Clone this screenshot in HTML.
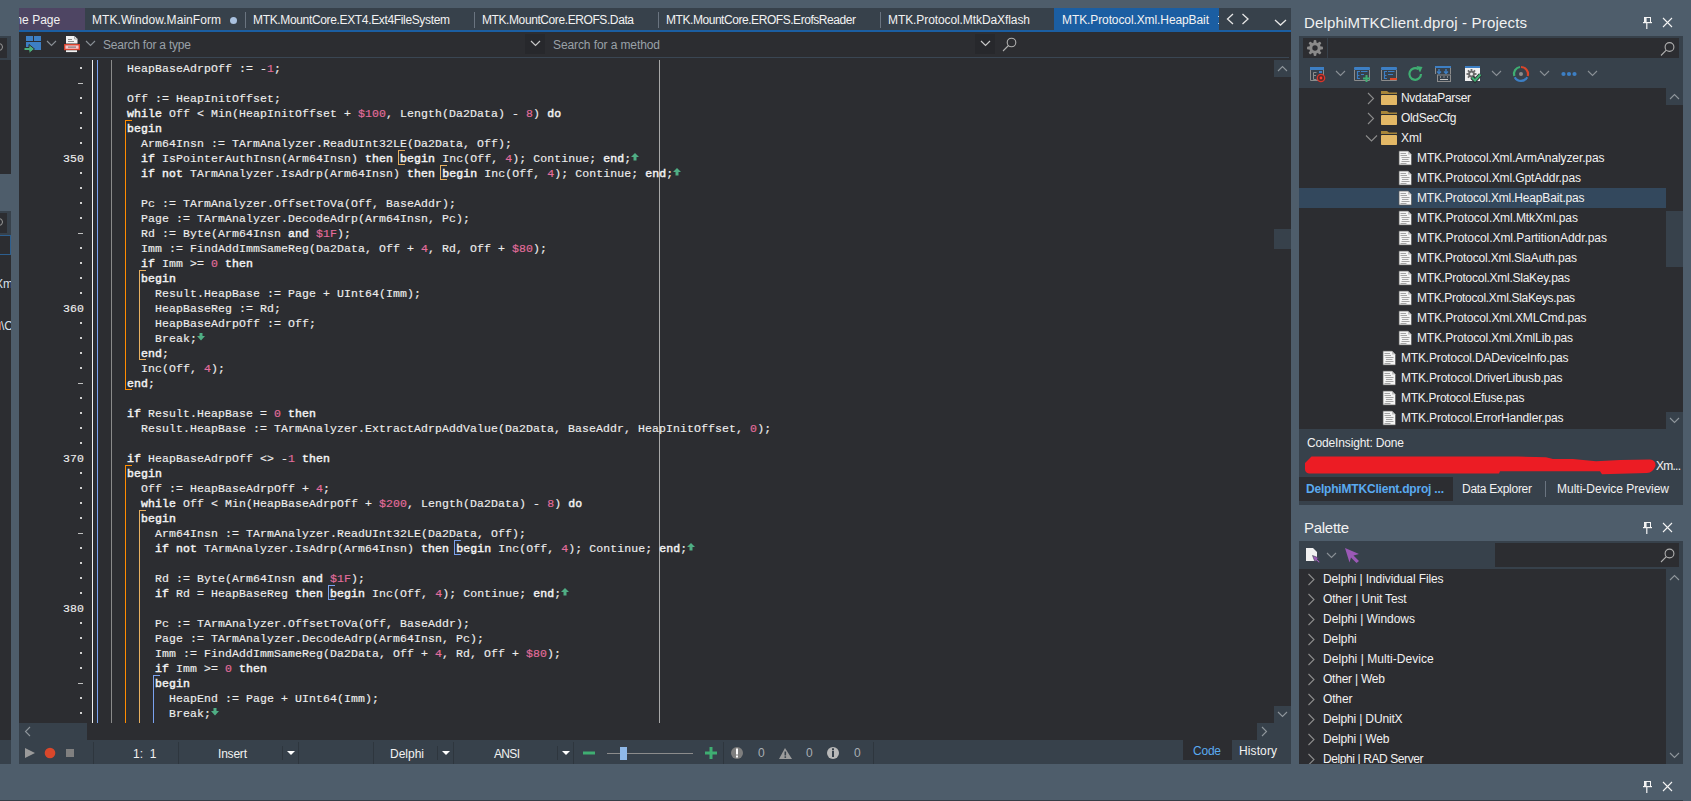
<!DOCTYPE html><html><head><meta charset="utf-8"><style>
*{margin:0;padding:0}
html,body{width:1691px;height:801px;overflow:hidden;background:#4e5d6b}
.a{position:absolute}
.ui{font-family:"Liberation Sans",sans-serif;font-size:12px;line-height:20px;color:#f2f2f2;white-space:pre}
.code{font-family:"Liberation Mono",monospace;font-size:11.5px;letter-spacing:0.1px;line-height:15px;color:#eeeeee;white-space:pre;-webkit-text-stroke:0.15px currentColor}
.code b{font-weight:normal;color:#f2f2f2;-webkit-text-stroke:0.45px currentColor}
.code i{font-style:normal;color:#e46d9d}
</style></head><body><div class="a" style="left:0px;top:0px;width:1691px;height:801px;background:#4e5d6b;"></div>
<div class="a" style="left:0px;top:36px;width:11px;height:704px;background:#2c2d31;"></div>
<div class="a" style="left:0px;top:36px;width:11px;height:24px;background:#37414b;"></div>
<div class="a" style="left:0px;top:38px;width:7px;height:20px;background:#2c2d31;"></div>
<div class="a" style="left:0px;top:174px;width:11px;height:37px;background:#4e5d6b;"></div>
<div class="a" style="left:0px;top:211px;width:11px;height:24px;background:#37414b;"></div>
<div class="a" style="left:0px;top:213px;width:7px;height:20px;background:#2c2d31;"></div>
<div class="a" style="left:0px;top:235px;width:11px;height:20px;background:#2c2d31;box-sizing:border-box;border:1px solid #2d5f8f;border-left:none"></div>
<div class="a" style="left:0px;top:740px;width:11px;height:24px;background:#37414b;"></div>
<div class="a" style="left:19px;top:8px;width:1272px;height:756px;background:#2c2d31;"></div>
<div class="a" style="left:19px;top:8px;width:1272px;height:22px;background:#37414b;"></div>
<div class="a" style="left:19px;top:8px;width:66px;height:22px;background:#4e4563;"></div>
<div class="a" style="left:1054px;top:8px;width:165px;height:22px;background:#1b5ea2;"></div>
<div class="a" style="left:19px;top:30px;width:1272px;height:2px;background:#1b5ea2;"></div>
<div class="a" style="left:19px;top:8px;width:66px;height:22px;overflow:hidden"><div class="a ui" style="left:-40px;top:2px">Welcome Page</div></div>
<div class="a ui" style="left:92px;top:10px;letter-spacing:0.054px;width:149px">MTK.Window.MainForm</div>
<div class="a ui" style="left:253px;top:10px;letter-spacing:-0.346px;width:217px">MTK.MountCore.EXT4.Ext4FileSystem</div>
<div class="a ui" style="left:482px;top:10px;letter-spacing:-0.408px;width:172px">MTK.MountCore.EROFS.Data</div>
<div class="a ui" style="left:666px;top:10px;letter-spacing:-0.447px;width:210px">MTK.MountCore.EROFS.ErofsReader</div>
<div class="a ui" style="left:888px;top:10px;letter-spacing:-0.089px;width:162px">MTK.Protocol.MtkDaXflash</div>
<div class="a ui" style="left:1062px;top:10px;letter-spacing:-0.100px;width:167px">MTK.Protocol.Xml.HeapBait</div>
<div class="a" style="left:245px;top:12px;width:1px;height:16px;background:#6a7480;"></div>
<div class="a" style="left:474px;top:12px;width:1px;height:16px;background:#6a7480;"></div>
<div class="a" style="left:658px;top:12px;width:1px;height:16px;background:#6a7480;"></div>
<div class="a" style="left:880px;top:12px;width:1px;height:16px;background:#6a7480;"></div>
<div class="a" style="left:230px;top:17px;width:7px;height:7px;border-radius:50%;background:#a9c1df"></div>
<svg class="a" style="left:1220px;top:8px" width="71" height="22" viewBox="0 0 71 22">
<path d="M13 6 L7.5 11 L13 16" fill="none" stroke="#e6e6e6" stroke-width="1.3"/>
<path d="M22.5 6 L28 11 L22.5 16" fill="none" stroke="#e6e6e6" stroke-width="1.3"/>
<path d="M55 12 L60.5 17 L66 12" fill="none" stroke="#e6e6e6" stroke-width="1.3"/>
</svg>
<div class="a" style="left:1218px;top:16px;width:1px;height:1px;background:#c8d8ea;"></div>
<div class="a" style="left:1218px;top:23px;width:1px;height:1px;background:#c8d8ea;"></div>
<svg class="a" style="left:0;top:36px" width="11" height="200"><circle cx="-1" cy="11" r="3.5" fill="none" stroke="#9a9a9a" stroke-width="1"/><circle cx="-1" cy="186" r="3.5" fill="none" stroke="#9a9a9a" stroke-width="1"/></svg>
<div class="a" style="left:19px;top:57px;width:1270px;height:1px;background:#3a4653;"></div>
<svg class="a" style="left:19px;top:32px" width="1272" height="25" viewBox="0 0 1272 25">
<rect x="7" y="4" width="7" height="5" fill="#3d7fc4"/><rect x="15" y="4" width="7" height="5" fill="#3d7fc4"/>
<rect x="7" y="10" width="15" height="8" fill="#3d7fc4"/>
<path d="M5 15.5 H10 V12.5 L15.5 17 L10 21.5 V18.5 H5 Z" fill="#4caf7a" stroke="#2c2d31" stroke-width="1"/>
<path d="M28 9 L32.5 13.5 L37 9" fill="none" stroke="#8a9096" stroke-width="1.1"/>
<path d="M47 4 H55.5 L58.5 7 V11.5 H47 Z" fill="#f2f2f2"/><path d="M55.5 4 V7 H58.5" fill="none" stroke="#9a9a9a" stroke-width="0.8"/>
<path d="M49 7.5 H53 M49 9.5 H55" stroke="#8c8c8c" stroke-width="1"/>
<rect x="45.7" y="12.7" width="14.6" height="4.8" fill="#f6c7cc" stroke="#d8432e" stroke-width="1.4"/>
<rect x="49" y="14.6" width="8" height="1" fill="#6a6a6a"/>
<rect x="47" y="18.3" width="11" height="1.8" fill="#f2f2f2"/>
<path d="M67 9 L71.5 13.5 L76 9" fill="none" stroke="#8a9096" stroke-width="1.1"/>
<rect x="506" y="2" width="20" height="20" fill="#27282c"/>
<path d="M512 9 L516.5 13.5 L521 9" fill="none" stroke="#c8c8c8" stroke-width="1.2"/>
<rect x="956" y="2" width="20" height="20" fill="#27282c"/>
<path d="M962 9 L966.5 13.5 L971 9" fill="none" stroke="#c8c8c8" stroke-width="1.2"/>
<circle cx="992.5" cy="10.5" r="4.3" fill="none" stroke="#b0b0b0" stroke-width="1.1"/>
<path d="M989.5 13.5 L984 19" stroke="#b0b0b0" stroke-width="1.1"/>
</svg>
<div class="a ui" style="left:103px;top:35px;letter-spacing:-0.212px;color:#9aa1a8;width:120px">Search for a type</div>
<div class="a ui" style="left:553px;top:35px;letter-spacing:-0.096px;color:#9aa1a8;width:140px">Search for a method</div>
<div class="a" style="left:19px;top:58px;width:1255px;height:665px;overflow:hidden">
<div class="a" style="left:73px;top:2px;width:1px;height:663px;background:#f0f0f0"></div>
<div class="a" style="left:78px;top:2px;width:1px;height:663px;background:#7aa2f0"></div>
<div class="a" style="left:92px;top:2px;width:1px;height:663px;background:#8a8a8a"></div>
<div class="a" style="left:640px;top:2px;width:1px;height:663px;background:#a8a8a8"></div>
<div class="a" style="left:106px;top:62px;width:1px;height:270px;background:#ff8c00"></div>
<div class="a" style="left:106px;top:62px;width:7px;height:1px;background:#ff8c00"></div>
<div class="a" style="left:106px;top:331px;width:7px;height:1px;background:#ff8c00"></div>
<div class="a" style="left:120px;top:212px;width:1px;height:90px;background:#e8b060"></div>
<div class="a" style="left:120px;top:212px;width:7px;height:1px;background:#e8b060"></div>
<div class="a" style="left:120px;top:301px;width:7px;height:1px;background:#e8b060"></div>
<div class="a" style="left:106px;top:407px;width:1px;height:258px;background:#ff8c00"></div>
<div class="a" style="left:106px;top:407px;width:7px;height:1px;background:#ff8c00"></div>
<div class="a" style="left:120px;top:452px;width:1px;height:213px;background:#e8b060"></div>
<div class="a" style="left:120px;top:452px;width:7px;height:1px;background:#e8b060"></div>
<div class="a" style="left:134px;top:617px;width:1px;height:48px;background:#7aa2f0"></div>
<div class="a" style="left:134px;top:617px;width:7px;height:1px;background:#7aa2f0"></div>
<div class="a" style="left:379px;top:92px;width:1px;height:15px;background:#e8b060"></div>
<div class="a" style="left:379px;top:92px;width:7px;height:1px;background:#e8b060"></div>
<div class="a" style="left:379px;top:106px;width:7px;height:1px;background:#e8b060"></div>
<div class="a" style="left:421px;top:107px;width:1px;height:15px;background:#e8b060"></div>
<div class="a" style="left:421px;top:107px;width:7px;height:1px;background:#e8b060"></div>
<div class="a" style="left:421px;top:121px;width:7px;height:1px;background:#e8b060"></div>
<div class="a" style="left:435px;top:482px;width:1px;height:15px;background:#7aa2f0"></div>
<div class="a" style="left:435px;top:482px;width:7px;height:1px;background:#7aa2f0"></div>
<div class="a" style="left:435px;top:496px;width:7px;height:1px;background:#7aa2f0"></div>
<div class="a" style="left:309px;top:527px;width:1px;height:15px;background:#7aa2f0"></div>
<div class="a" style="left:309px;top:527px;width:7px;height:1px;background:#7aa2f0"></div>
<div class="a" style="left:309px;top:541px;width:7px;height:1px;background:#7aa2f0"></div>
<div class="a" style="left:61px;top:9px;width:2px;height:2px;background:#d0d0d0"></div>
<div class="a" style="left:59px;top:25px;width:5px;height:1px;background:#c0c0c0"></div>
<div class="a" style="left:61px;top:39px;width:2px;height:2px;background:#d0d0d0"></div>
<div class="a" style="left:61px;top:54px;width:2px;height:2px;background:#d0d0d0"></div>
<div class="a" style="left:61px;top:69px;width:2px;height:2px;background:#d0d0d0"></div>
<div class="a" style="left:61px;top:84px;width:2px;height:2px;background:#d0d0d0"></div>
<div class="a code" style="left:44px;top:93px;width:21px;text-align:right">350</div>
<div class="a" style="left:61px;top:114px;width:2px;height:2px;background:#d0d0d0"></div>
<div class="a" style="left:61px;top:129px;width:2px;height:2px;background:#d0d0d0"></div>
<div class="a" style="left:61px;top:144px;width:2px;height:2px;background:#d0d0d0"></div>
<div class="a" style="left:61px;top:159px;width:2px;height:2px;background:#d0d0d0"></div>
<div class="a" style="left:59px;top:175px;width:5px;height:1px;background:#c0c0c0"></div>
<div class="a" style="left:61px;top:189px;width:2px;height:2px;background:#d0d0d0"></div>
<div class="a" style="left:61px;top:204px;width:2px;height:2px;background:#d0d0d0"></div>
<div class="a" style="left:61px;top:219px;width:2px;height:2px;background:#d0d0d0"></div>
<div class="a" style="left:61px;top:234px;width:2px;height:2px;background:#d0d0d0"></div>
<div class="a code" style="left:44px;top:243px;width:21px;text-align:right">360</div>
<div class="a" style="left:61px;top:264px;width:2px;height:2px;background:#d0d0d0"></div>
<div class="a" style="left:61px;top:279px;width:2px;height:2px;background:#d0d0d0"></div>
<div class="a" style="left:61px;top:294px;width:2px;height:2px;background:#d0d0d0"></div>
<div class="a" style="left:61px;top:309px;width:2px;height:2px;background:#d0d0d0"></div>
<div class="a" style="left:59px;top:325px;width:5px;height:1px;background:#c0c0c0"></div>
<div class="a" style="left:61px;top:339px;width:2px;height:2px;background:#d0d0d0"></div>
<div class="a" style="left:61px;top:354px;width:2px;height:2px;background:#d0d0d0"></div>
<div class="a" style="left:61px;top:369px;width:2px;height:2px;background:#d0d0d0"></div>
<div class="a" style="left:61px;top:384px;width:2px;height:2px;background:#d0d0d0"></div>
<div class="a code" style="left:44px;top:393px;width:21px;text-align:right">370</div>
<div class="a" style="left:61px;top:414px;width:2px;height:2px;background:#d0d0d0"></div>
<div class="a" style="left:61px;top:429px;width:2px;height:2px;background:#d0d0d0"></div>
<div class="a" style="left:61px;top:444px;width:2px;height:2px;background:#d0d0d0"></div>
<div class="a" style="left:61px;top:459px;width:2px;height:2px;background:#d0d0d0"></div>
<div class="a" style="left:59px;top:475px;width:5px;height:1px;background:#c0c0c0"></div>
<div class="a" style="left:61px;top:489px;width:2px;height:2px;background:#d0d0d0"></div>
<div class="a" style="left:61px;top:504px;width:2px;height:2px;background:#d0d0d0"></div>
<div class="a" style="left:61px;top:519px;width:2px;height:2px;background:#d0d0d0"></div>
<div class="a" style="left:61px;top:534px;width:2px;height:2px;background:#d0d0d0"></div>
<div class="a code" style="left:44px;top:543px;width:21px;text-align:right">380</div>
<div class="a" style="left:61px;top:564px;width:2px;height:2px;background:#d0d0d0"></div>
<div class="a" style="left:61px;top:579px;width:2px;height:2px;background:#d0d0d0"></div>
<div class="a" style="left:61px;top:594px;width:2px;height:2px;background:#d0d0d0"></div>
<div class="a" style="left:61px;top:609px;width:2px;height:2px;background:#d0d0d0"></div>
<div class="a" style="left:59px;top:625px;width:5px;height:1px;background:#c0c0c0"></div>
<div class="a" style="left:61px;top:639px;width:2px;height:2px;background:#d0d0d0"></div>
<div class="a" style="left:61px;top:654px;width:2px;height:2px;background:#d0d0d0"></div>
<pre class="a code" style="left:108px;top:3px">HeapBaseAdrpOff := -<i>1</i>;

Off := HeapInitOffset;
<b>while</b> Off &lt; Min(HeapInitOffset + <i>$100</i>, Length(Da2Data) - <i>8</i>) <b>do</b>
<b>begin</b>
  Arm64Insn := TArmAnalyzer.ReadUInt32LE(Da2Data, Off);
  <b>if</b> IsPointerAuthInsn(Arm64Insn) <b>then</b> <b>begin</b> Inc(Off, <i>4</i>); Continue; <b>end</b>;
  <b>if</b> <b>not</b> TArmAnalyzer.IsAdrp(Arm64Insn) <b>then</b> <b>begin</b> Inc(Off, <i>4</i>); Continue; <b>end</b>;

  Pc := TArmAnalyzer.OffsetToVa(Off, BaseAddr);
  Page := TArmAnalyzer.DecodeAdrp(Arm64Insn, Pc);
  Rd := Byte(Arm64Insn <b>and</b> <i>$1F</i>);
  Imm := FindAddImmSameReg(Da2Data, Off + <i>4</i>, Rd, Off + <i>$80</i>);
  <b>if</b> Imm &gt;= <i>0</i> <b>then</b>
  <b>begin</b>
    Result.HeapBase := Page + UInt64(Imm);
    HeapBaseReg := Rd;
    HeapBaseAdrpOff := Off;
    Break;
  <b>end</b>;
  Inc(Off, <i>4</i>);
<b>end</b>;

<b>if</b> Result.HeapBase = <i>0</i> <b>then</b>
  Result.HeapBase := TArmAnalyzer.ExtractAdrpAddValue(Da2Data, BaseAddr, HeapInitOffset, <i>0</i>);

<b>if</b> HeapBaseAdrpOff &lt;&gt; -<i>1</i> <b>then</b>
<b>begin</b>
  Off := HeapBaseAdrpOff + <i>4</i>;
  <b>while</b> Off &lt; Min(HeapBaseAdrpOff + <i>$200</i>, Length(Da2Data) - <i>8</i>) <b>do</b>
  <b>begin</b>
    Arm64Insn := TArmAnalyzer.ReadUInt32LE(Da2Data, Off);
    <b>if</b> <b>not</b> TArmAnalyzer.IsAdrp(Arm64Insn) <b>then</b> <b>begin</b> Inc(Off, <i>4</i>); Continue; <b>end</b>;

    Rd := Byte(Arm64Insn <b>and</b> <i>$1F</i>);
    <b>if</b> Rd = HeapBaseReg <b>then</b> <b>begin</b> Inc(Off, <i>4</i>); Continue; <b>end</b>;

    Pc := TArmAnalyzer.OffsetToVa(Off, BaseAddr);
    Page := TArmAnalyzer.DecodeAdrp(Arm64Insn, Pc);
    Imm := FindAddImmSameReg(Da2Data, Off + <i>4</i>, Rd, Off + <i>$80</i>);
    <b>if</b> Imm &gt;= <i>0</i> <b>then</b>
    <b>begin</b>
      HeapEnd := Page + UInt64(Imm);
      Break;</pre>
<svg class="a" style="left:-19px;top:-58px" width="1300" height="800"><path fill="#4fae84" d="M635 153 L639 157 H636.5 V160.5 H633.5 V157 H631 Z M677 168 L681 172 H678.5 V175.5 H675.5 V172 H673 Z M691 543 L695 547 H692.5 V550.5 H689.5 V547 H687 Z M565 588 L569 592 H566.5 V595.5 H563.5 V592 H561 Z M199.5 333 H202.5 V336 H205 L201 340.5 L197 336 H199.5 Z M213.5 708 H216.5 V711 H219 L215 715.5 L211 711 H213.5 Z"/></svg>
</div>
<div class="a" style="left:1274px;top:60px;width:17px;height:17px;background:#37414b;"></div>
<svg class="a" style="left:1274px;top:60px" width="17" height="17"><path d="M4 11 L8.5 6.5 L13 11" fill="none" stroke="#8f969c" stroke-width="1.1"/></svg>
<div class="a" style="left:1274px;top:229px;width:17px;height:20px;background:#37414b;"></div>
<div class="a" style="left:1274px;top:706px;width:17px;height:17px;background:#37414b;"></div>
<svg class="a" style="left:1274px;top:706px" width="17" height="17"><path d="M4 6 L8.5 10.5 L13 6" fill="none" stroke="#8f969c" stroke-width="1.1"/></svg>
<div class="a" style="left:19px;top:723px;width:68px;height:17px;background:#37414b;"></div>
<svg class="a" style="left:19px;top:723px" width="20" height="17"><path d="M11 4 L6.5 8.5 L11 13" fill="none" stroke="#8f969c" stroke-width="1.1"/></svg>
<div class="a" style="left:1257px;top:723px;width:34px;height:17px;background:#37414b;"></div>
<svg class="a" style="left:1257px;top:723px" width="20" height="17"><path d="M5 4 L9.5 8.5 L5 13" fill="none" stroke="#8f969c" stroke-width="1.1"/></svg>
<div class="a" style="left:19px;top:740px;width:1272px;height:24px;background:#37414b;"></div>
<div class="a" style="left:93px;top:742px;width:1px;height:22px;background:#2e363e;"></div>
<div class="a" style="left:178px;top:742px;width:1px;height:22px;background:#2e363e;"></div>
<div class="a" style="left:298px;top:742px;width:1px;height:22px;background:#2e363e;"></div>
<div class="a" style="left:373px;top:742px;width:1px;height:22px;background:#2e363e;"></div>
<div class="a" style="left:453px;top:742px;width:1px;height:22px;background:#2e363e;"></div>
<div class="a" style="left:573px;top:742px;width:1px;height:22px;background:#2e363e;"></div>
<div class="a" style="left:723px;top:742px;width:1px;height:22px;background:#2e363e;"></div>
<div class="a" style="left:873px;top:742px;width:1px;height:22px;background:#2e363e;"></div>
<div class="a" style="left:282px;top:746px;width:1px;height:14px;background:#2e363e;"></div>
<div class="a" style="left:437px;top:746px;width:1px;height:14px;background:#2e363e;"></div>
<div class="a" style="left:557px;top:746px;width:1px;height:14px;background:#2e363e;"></div>
<svg class="a" style="left:19px;top:740px" width="1272" height="24">
<path d="M6 8 L16 13 L6 18 Z" fill="#9b9b9b"/>
<circle cx="31" cy="13" r="5.3" fill="#d9472b"/>
<rect x="47" y="9" width="8" height="8" fill="#808080"/>
<path d="M268 11 L272 15 L276 11 Z" fill="#ffffff"/>
<path d="M423 11 L427 15 L431 11 Z" fill="#ffffff"/>
<path d="M543 11 L547 15 L551 11 Z" fill="#ffffff"/>
<rect x="564" y="11.5" width="12" height="3" fill="#3fae72"/>
<rect x="588" y="13" width="86" height="1" fill="#8c8c8c"/>
<rect x="601" y="7" width="7" height="13" fill="#8fb9e9"/>
<rect x="686" y="11.5" width="12" height="3" fill="#3fae72"/><rect x="690.5" y="7" width="3" height="12" fill="#3fae72"/>
<circle cx="718" cy="13" r="6" fill="#7e7e7e"/><rect x="717" y="8.5" width="2" height="6" fill="#fff"/><rect x="717" y="15.5" width="2" height="2" fill="#fff"/>
<path d="M766 8 L773 19 H760 Z" fill="#9c9c9c"/><rect x="765.5" y="11.5" width="1.6" height="4" fill="#37414b"/><rect x="765.5" y="16.3" width="1.6" height="1.6" fill="#37414b"/>
<circle cx="814" cy="13" r="6" fill="#b9b9b9"/><rect x="813" y="11" width="2" height="6" fill="#37414b"/><rect x="813" y="8.3" width="2" height="2" fill="#37414b"/>
</svg>
<div class="a ui" style="left:133px;top:744px;width:40px">1:  1</div>
<div class="a ui" style="left:218px;top:744px;letter-spacing:-0.203px;width:40px">Insert</div>
<div class="a ui" style="left:390px;top:744px;letter-spacing:-0.006px;width:40px">Delphi</div>
<div class="a ui" style="left:494px;top:744px;letter-spacing:-0.672px;width:40px">ANSI</div>
<div class="a ui" style="left:758px;top:743px;color:#a8aeb4;width:10px">0</div>
<div class="a ui" style="left:806px;top:743px;color:#a8aeb4;width:10px">0</div>
<div class="a ui" style="left:854px;top:743px;color:#a8aeb4;width:10px">0</div>
<div class="a" style="left:1183px;top:740px;width:49px;height:20px;background:#2c2d31;"></div>
<div class="a ui" style="left:1193px;top:741px;letter-spacing:-0.229px;color:#5aaaf0;width:40px">Code</div>
<div class="a ui" style="left:1239px;top:741px;letter-spacing:0.109px;width:50px">History</div>
<div class="a ui" style="left:1304px;top:13px;letter-spacing:0.175px;font-size:15px;width:300px">DelphiMTKClient.dproj - Projects</div>
<svg class="a" style="left:1640px;top:14px" width="40" height="16">
<rect x="4.5" y="3.5" width="6" height="5" fill="none" stroke="#f4f4f4" stroke-width="1"/><rect x="5" y="4" width="1.6" height="4.5" fill="#f4f4f4"/>
<rect x="3" y="8" width="9" height="1.2" fill="#f4f4f4"/><rect x="6.2" y="9" width="1.2" height="6" fill="#f4f4f4"/>
<path d="M23 4 L32 13 M32 4 L23 13" fill="none" stroke="#f4f4f4" stroke-width="1.1"/>
</svg>
<div class="a" style="left:1299px;top:36px;width:384px;height:469px;background:#37414b;"></div>
<div class="a" style="left:1303px;top:38px;width:24px;height:20px;background:#2c2d31;"></div>
<div class="a" style="left:1328px;top:38px;width:351px;height:20px;background:#2c2d31;"></div>
<svg class="a" style="left:1303px;top:38px" width="24" height="20" viewBox="0 0 24 20">
<g fill="#8a8a8a" transform="translate(12 10)"><circle r="5.8"/><rect x="-1.4" y="-8" width="2.8" height="3.5" rx="1" transform="rotate(0)"/><rect x="-1.4" y="-8" width="2.8" height="3.5" rx="1" transform="rotate(45)"/><rect x="-1.4" y="-8" width="2.8" height="3.5" rx="1" transform="rotate(90)"/><rect x="-1.4" y="-8" width="2.8" height="3.5" rx="1" transform="rotate(135)"/><rect x="-1.4" y="-8" width="2.8" height="3.5" rx="1" transform="rotate(180)"/><rect x="-1.4" y="-8" width="2.8" height="3.5" rx="1" transform="rotate(225)"/><rect x="-1.4" y="-8" width="2.8" height="3.5" rx="1" transform="rotate(270)"/><rect x="-1.4" y="-8" width="2.8" height="3.5" rx="1" transform="rotate(315)"/></g><circle cx="12" cy="10" r="2.7" fill="#2c2d31"/></svg>
<svg class="a" style="left:1655px;top:38px" width="24" height="20"><circle cx="14.5" cy="9" r="4.4" fill="none" stroke="#b0b0b0" stroke-width="1.1"/><path d="M11.3 12.2 L6 17.5" stroke="#b0b0b0" stroke-width="1.1"/></svg>
<svg class="a" style="left:1299px;top:58px" width="384" height="30">
<rect x="11" y="9" width="14" height="3" fill="#3d7fc4"/>
<path d="M11.5 12 V22.5 H24.5 V12" fill="none" stroke="#8c8c8c" stroke-width="1"/>
<path d="M17.5 14.5 H14.5 V21.5 H17.5 M14.5 17.5 H17" fill="none" stroke="#8c8c8c" stroke-width="1"/>
<rect x="20" y="13" width="3" height="2" fill="#3d7fc4"/>
<circle cx="22" cy="20" r="3.7" fill="#5a2a2a" stroke="#d8352a" stroke-width="1.3"/><circle cx="22" cy="20" r="1.4" fill="#ff3b30"/>
<path d="M37 13 L41.5 17.5 L46 13" fill="none" stroke="#8a9096" stroke-width="1.1"/>
<rect x="55" y="9" width="16" height="3" rx="1" fill="#3d7fc4"/>
<path d="M55.5 12 V22.5 H70.5 V12" fill="none" stroke="#8c8c8c" stroke-width="1"/>
<path d="M61 13.5 H58.5 V20.5 H61 M58.5 17.5 H60.5" fill="none" stroke="#3d7fc4" stroke-width="1.2"/>
<path d="M62 13.5 H68.5 M62 16.5 H65" fill="none" stroke="#3d7fc4" stroke-width="1"/>
<path d="M64 20.6 H71 M67.5 17 V24" stroke="#3fae72" stroke-width="2"/>
<rect x="82" y="9" width="16" height="3" rx="1" fill="#3d7fc4"/>
<path d="M82.5 12 V22.5 H97.5 V12" fill="none" stroke="#8c8c8c" stroke-width="1"/>
<path d="M88 13.5 H85.5 V20.5 H88 M85.5 17.5 H87.5" fill="none" stroke="#3d7fc4" stroke-width="1.2"/>
<path d="M89 13.5 H95.5 M89 16.5 H94" fill="none" stroke="#3d7fc4" stroke-width="1"/>
<rect x="91" y="20" width="7" height="2" fill="#e04a2a"/>
<g transform="translate(109 8)">
<path d="M13 8 A5.8 5.8 0 1 1 10.5 3.2" fill="none" stroke="#3fae72" stroke-width="2.2"/>
<path d="M8.5 0 L14.5 1 L12 6.5 Z" fill="#3fae72"/>
</g>
<g transform="translate(136 8)">
<rect x="0" y="0" width="16" height="2" fill="#3d7fc4"/><path d="M0.5 2 V8 M15.5 2 V8" stroke="#8c8c8c"/>
<path d="M4 3 V7 M2 5.5 L4 7.5 L6 5.5 M11 3 V7 M9 5.5 L11 7.5 L13 5.5" fill="none" stroke="#3d7fc4" stroke-width="1.4"/>
<rect x="2.5" y="9" width="13" height="6.5" fill="none" stroke="#8c8c8c"/>
<path d="M5 11 H6 M8.5 11 H9.5 M12 11 H13 M5 13.5 H13" stroke="#c8c8c8"/>
</g>
<g transform="translate(166 8)">
<rect x="0" y="0" width="15" height="2" fill="#3d7fc4"/><rect x="0" y="2" width="15" height="13" fill="#f0f0f0"/>
<g transform="translate(6.5 8)" fill="#6a6a6a"><circle r="3.3"/><rect x="-0.9" y="-5" width="1.8" height="10"/><rect x="-5" y="-0.9" width="10" height="1.8"/><rect x="-0.9" y="-5" width="1.8" height="10" transform="rotate(45)"/><rect x="-0.9" y="-5" width="1.8" height="10" transform="rotate(-45)"/></g>
<circle cx="6.5" cy="8" r="1.5" fill="#f0f0f0"/>
<path d="M7 11.5 L10 14.5 L15.5 8.5" fill="none" stroke="#2c2d31" stroke-width="4"/>
<path d="M7 11.5 L10 14.5 L15.5 8.5" fill="none" stroke="#3fae72" stroke-width="2.2"/>
</g>
<path d="M193 13 L197.5 17.5 L202 13" fill="none" stroke="#8a9096" stroke-width="1.1"/>
<g transform="translate(222 16)">
<path d="M0 -7 A7 7 0 0 1 6.7 2" fill="none" stroke="#d8452a" stroke-width="2.2"/>
<path d="M6.2 3.2 A7 7 0 0 1 -6.2 3.2" fill="none" stroke="#3d7fc4" stroke-width="2.2"/>
<path d="M-6.7 2 A7 7 0 0 1 -1 -7" fill="none" stroke="#3fae72" stroke-width="2.2"/>
<circle r="2" fill="#8c8c8c"/>
</g>
<path d="M241 13 L245.5 17.5 L250 13" fill="none" stroke="#8a9096" stroke-width="1.1"/>
<circle cx="264.5" cy="16" r="2.1" fill="#3d7fc4"/><circle cx="270" cy="16" r="2.1" fill="#3d7fc4"/><circle cx="275.5" cy="16" r="2.1" fill="#3d7fc4"/>
<path d="M289 13 L293.5 17.5 L298 13" fill="none" stroke="#8a9096" stroke-width="1.1"/>
</svg>
<div class="a" style="left:1299px;top:88px;width:384px;height:341px;background:#2c2d31;"></div>
<div class="a" style="left:1299px;top:188px;width:367px;height:20px;background:#33485d;"></div>
<div class="a" style="left:1666px;top:88px;width:17px;height:17px;background:#37414b;"></div>
<div class="a" style="left:1666px;top:211px;width:17px;height:56px;background:#37414b;"></div>
<div class="a" style="left:1666px;top:412px;width:17px;height:17px;background:#37414b;"></div>
<svg class="a" style="left:1666px;top:88px" width="17" height="341"><path d="M4 11 L8.5 6.5 L13 11" fill="none" stroke="#8f969c" stroke-width="1.1"/><path d="M4 330 L8.5 334.5 L13 330" fill="none" stroke="#8f969c" stroke-width="1.1"/></svg>
<div class="a ui" style="left:1401px;top:88px;letter-spacing:-0.307px;width:120px">NvdataParser</div>
<div class="a ui" style="left:1401px;top:108px;letter-spacing:-0.316px;width:120px">OldSecCfg</div>
<div class="a ui" style="left:1401px;top:128px;letter-spacing:-0.036px;width:120px">Xml</div>
<div class="a ui" style="left:1417px;top:148px;letter-spacing:-0.104px;width:240px">MTK.Protocol.Xml.ArmAnalyzer.pas</div>
<div class="a ui" style="left:1417px;top:168px;letter-spacing:-0.101px;width:240px">MTK.Protocol.Xml.GptAddr.pas</div>
<div class="a ui" style="left:1417px;top:188px;letter-spacing:-0.160px;width:240px">MTK.Protocol.Xml.HeapBait.pas</div>
<div class="a ui" style="left:1417px;top:208px;letter-spacing:-0.066px;width:240px">MTK.Protocol.Xml.MtkXml.pas</div>
<div class="a ui" style="left:1417px;top:228px;letter-spacing:-0.043px;width:240px">MTK.Protocol.Xml.PartitionAddr.pas</div>
<div class="a ui" style="left:1417px;top:248px;letter-spacing:-0.175px;width:240px">MTK.Protocol.Xml.SlaAuth.pas</div>
<div class="a ui" style="left:1417px;top:268px;letter-spacing:-0.263px;width:240px">MTK.Protocol.Xml.SlaKey.pas</div>
<div class="a ui" style="left:1417px;top:288px;letter-spacing:-0.323px;width:240px">MTK.Protocol.Xml.SlaKeys.pas</div>
<div class="a ui" style="left:1417px;top:308px;letter-spacing:-0.120px;width:240px">MTK.Protocol.Xml.XMLCmd.pas</div>
<div class="a ui" style="left:1417px;top:328px;letter-spacing:-0.130px;width:240px">MTK.Protocol.Xml.XmlLib.pas</div>
<div class="a ui" style="left:1401px;top:348px;letter-spacing:-0.160px;width:240px">MTK.Protocol.DADeviceInfo.pas</div>
<div class="a ui" style="left:1401px;top:368px;letter-spacing:-0.159px;width:240px">MTK.Protocol.DriverLibusb.pas</div>
<div class="a ui" style="left:1401px;top:388px;letter-spacing:-0.285px;width:240px">MTK.Protocol.Efuse.pas</div>
<div class="a ui" style="left:1401px;top:408px;letter-spacing:-0.148px;width:240px">MTK.Protocol.ErrorHandler.pas</div>
<svg class="a" style="left:0;top:0" width="1691" height="801"><path d="M1368 93 L1373.5 98.5 L1368 104" fill="none" stroke="#8c8c8c" stroke-width="1.1"/><path d="M1381 91 H1387 L1389 92.5 H1397 V94 H1381 Z" fill="#a8863a"/><rect x="1381" y="95" width="16" height="10" rx="0.8" fill="#e3b866"/><path d="M1368 113 L1373.5 118.5 L1368 124" fill="none" stroke="#8c8c8c" stroke-width="1.1"/><path d="M1381 111 H1387 L1389 112.5 H1397 V114 H1381 Z" fill="#a8863a"/><rect x="1381" y="115" width="16" height="10" rx="0.8" fill="#e3b866"/><path d="M1366 135.5 L1371.5 141 L1377 135.5" fill="none" stroke="#8c8c8c" stroke-width="1.1"/><path d="M1381 131 H1387 L1389 132.5 H1397 V134 H1381 Z" fill="#a8863a"/><rect x="1381" y="135" width="16" height="10" rx="0.8" fill="#e3b866"/><path d="M1399 151 H1408 L1411.5 154.5 V165 H1399 Z" fill="#f4f4f4" stroke="#5a5a5a" stroke-width="0.7"/><path d="M1408 151 V154.5 H1411.5 Z" fill="#c0c0c0"/><path d="M1400.5 153.5 H1406 M1400.5 155.5 H1407 M1401.5 157.5 H1409.5 M1402 159.5 H1408.5 M1401.5 161.5 H1409.5 M1400.5 163.5 H1406.5" stroke="#a4a4a4" stroke-width="1"/><path d="M1399 171 H1408 L1411.5 174.5 V185 H1399 Z" fill="#f4f4f4" stroke="#5a5a5a" stroke-width="0.7"/><path d="M1408 171 V174.5 H1411.5 Z" fill="#c0c0c0"/><path d="M1400.5 173.5 H1406 M1400.5 175.5 H1407 M1401.5 177.5 H1409.5 M1402 179.5 H1408.5 M1401.5 181.5 H1409.5 M1400.5 183.5 H1406.5" stroke="#a4a4a4" stroke-width="1"/><path d="M1399 191 H1408 L1411.5 194.5 V205 H1399 Z" fill="#f4f4f4" stroke="#5a5a5a" stroke-width="0.7"/><path d="M1408 191 V194.5 H1411.5 Z" fill="#c0c0c0"/><path d="M1400.5 193.5 H1406 M1400.5 195.5 H1407 M1401.5 197.5 H1409.5 M1402 199.5 H1408.5 M1401.5 201.5 H1409.5 M1400.5 203.5 H1406.5" stroke="#a4a4a4" stroke-width="1"/><path d="M1399 211 H1408 L1411.5 214.5 V225 H1399 Z" fill="#f4f4f4" stroke="#5a5a5a" stroke-width="0.7"/><path d="M1408 211 V214.5 H1411.5 Z" fill="#c0c0c0"/><path d="M1400.5 213.5 H1406 M1400.5 215.5 H1407 M1401.5 217.5 H1409.5 M1402 219.5 H1408.5 M1401.5 221.5 H1409.5 M1400.5 223.5 H1406.5" stroke="#a4a4a4" stroke-width="1"/><path d="M1399 231 H1408 L1411.5 234.5 V245 H1399 Z" fill="#f4f4f4" stroke="#5a5a5a" stroke-width="0.7"/><path d="M1408 231 V234.5 H1411.5 Z" fill="#c0c0c0"/><path d="M1400.5 233.5 H1406 M1400.5 235.5 H1407 M1401.5 237.5 H1409.5 M1402 239.5 H1408.5 M1401.5 241.5 H1409.5 M1400.5 243.5 H1406.5" stroke="#a4a4a4" stroke-width="1"/><path d="M1399 251 H1408 L1411.5 254.5 V265 H1399 Z" fill="#f4f4f4" stroke="#5a5a5a" stroke-width="0.7"/><path d="M1408 251 V254.5 H1411.5 Z" fill="#c0c0c0"/><path d="M1400.5 253.5 H1406 M1400.5 255.5 H1407 M1401.5 257.5 H1409.5 M1402 259.5 H1408.5 M1401.5 261.5 H1409.5 M1400.5 263.5 H1406.5" stroke="#a4a4a4" stroke-width="1"/><path d="M1399 271 H1408 L1411.5 274.5 V285 H1399 Z" fill="#f4f4f4" stroke="#5a5a5a" stroke-width="0.7"/><path d="M1408 271 V274.5 H1411.5 Z" fill="#c0c0c0"/><path d="M1400.5 273.5 H1406 M1400.5 275.5 H1407 M1401.5 277.5 H1409.5 M1402 279.5 H1408.5 M1401.5 281.5 H1409.5 M1400.5 283.5 H1406.5" stroke="#a4a4a4" stroke-width="1"/><path d="M1399 291 H1408 L1411.5 294.5 V305 H1399 Z" fill="#f4f4f4" stroke="#5a5a5a" stroke-width="0.7"/><path d="M1408 291 V294.5 H1411.5 Z" fill="#c0c0c0"/><path d="M1400.5 293.5 H1406 M1400.5 295.5 H1407 M1401.5 297.5 H1409.5 M1402 299.5 H1408.5 M1401.5 301.5 H1409.5 M1400.5 303.5 H1406.5" stroke="#a4a4a4" stroke-width="1"/><path d="M1399 311 H1408 L1411.5 314.5 V325 H1399 Z" fill="#f4f4f4" stroke="#5a5a5a" stroke-width="0.7"/><path d="M1408 311 V314.5 H1411.5 Z" fill="#c0c0c0"/><path d="M1400.5 313.5 H1406 M1400.5 315.5 H1407 M1401.5 317.5 H1409.5 M1402 319.5 H1408.5 M1401.5 321.5 H1409.5 M1400.5 323.5 H1406.5" stroke="#a4a4a4" stroke-width="1"/><path d="M1399 331 H1408 L1411.5 334.5 V345 H1399 Z" fill="#f4f4f4" stroke="#5a5a5a" stroke-width="0.7"/><path d="M1408 331 V334.5 H1411.5 Z" fill="#c0c0c0"/><path d="M1400.5 333.5 H1406 M1400.5 335.5 H1407 M1401.5 337.5 H1409.5 M1402 339.5 H1408.5 M1401.5 341.5 H1409.5 M1400.5 343.5 H1406.5" stroke="#a4a4a4" stroke-width="1"/><path d="M1383 351 H1392 L1395.5 354.5 V365 H1383 Z" fill="#f4f4f4" stroke="#5a5a5a" stroke-width="0.7"/><path d="M1392 351 V354.5 H1395.5 Z" fill="#c0c0c0"/><path d="M1384.5 353.5 H1390 M1384.5 355.5 H1391 M1385.5 357.5 H1393.5 M1386 359.5 H1392.5 M1385.5 361.5 H1393.5 M1384.5 363.5 H1390.5" stroke="#a4a4a4" stroke-width="1"/><path d="M1383 371 H1392 L1395.5 374.5 V385 H1383 Z" fill="#f4f4f4" stroke="#5a5a5a" stroke-width="0.7"/><path d="M1392 371 V374.5 H1395.5 Z" fill="#c0c0c0"/><path d="M1384.5 373.5 H1390 M1384.5 375.5 H1391 M1385.5 377.5 H1393.5 M1386 379.5 H1392.5 M1385.5 381.5 H1393.5 M1384.5 383.5 H1390.5" stroke="#a4a4a4" stroke-width="1"/><path d="M1383 391 H1392 L1395.5 394.5 V405 H1383 Z" fill="#f4f4f4" stroke="#5a5a5a" stroke-width="0.7"/><path d="M1392 391 V394.5 H1395.5 Z" fill="#c0c0c0"/><path d="M1384.5 393.5 H1390 M1384.5 395.5 H1391 M1385.5 397.5 H1393.5 M1386 399.5 H1392.5 M1385.5 401.5 H1393.5 M1384.5 403.5 H1390.5" stroke="#a4a4a4" stroke-width="1"/><path d="M1383 411 H1392 L1395.5 414.5 V425 H1383 Z" fill="#f4f4f4" stroke="#5a5a5a" stroke-width="0.7"/><path d="M1392 411 V414.5 H1395.5 Z" fill="#c0c0c0"/><path d="M1384.5 413.5 H1390 M1384.5 415.5 H1391 M1385.5 417.5 H1393.5 M1386 419.5 H1392.5 M1385.5 421.5 H1393.5 M1384.5 423.5 H1390.5" stroke="#a4a4a4" stroke-width="1"/></svg>
<div class="a ui" style="left:1307px;top:433px;letter-spacing:-0.150px;width:120px">CodeInsight: Done</div>
<svg class="a" style="left:0;top:0" width="1691" height="801"><path d="M1305 463 L1311.5 456.5 L1518 456.5 L1546 457.3 L1553 459 L1573 459 L1596 461.2 L1620 460 L1650 459.5 Q1656 460 1655.5 466 Q1653 472.5 1647 473 L1602 474.2 L1600 471.3 L1500 471.3 L1499 473.4 L1309 473.4 Q1305 473 1305 469 Z" fill="#ec1c24"/></svg>
<div class="a ui" style="left:1656px;top:456px;letter-spacing:-0.754px;width:40px">Xm...</div>
<div class="a" style="left:1299px;top:477px;width:154px;height:24px;background:#2c2d31;"></div>
<div class="a ui" style="left:1306px;top:479px;letter-spacing:-0.195px;color:#5aaaf0;font-weight:bold;width:160px">DelphiMTKClient.dproj ...</div>
<div class="a ui" style="left:1462px;top:479px;letter-spacing:-0.281px;width:100px">Data Explorer</div>
<div class="a" style="left:1545px;top:481px;width:1px;height:16px;background:#6a7480;"></div>
<div class="a ui" style="left:1557px;top:479px;letter-spacing:-0.002px;width:130px">Multi-Device Preview</div>
<div class="a ui" style="left:1304px;top:518px;letter-spacing:-0.284px;font-size:15px;width:80px">Palette</div>
<svg class="a" style="left:1640px;top:519px" width="40" height="16">
<rect x="4.5" y="3.5" width="6" height="5" fill="none" stroke="#f4f4f4" stroke-width="1"/><rect x="5" y="4" width="1.6" height="4.5" fill="#f4f4f4"/>
<rect x="3" y="8" width="9" height="1.2" fill="#f4f4f4"/><rect x="6.2" y="9" width="1.2" height="6" fill="#f4f4f4"/>
<path d="M23 4 L32 13 M32 4 L23 13" fill="none" stroke="#f4f4f4" stroke-width="1.1"/>
</svg>
<div class="a" style="left:1299px;top:541px;width:384px;height:223px;background:#37414b;"></div>
<div class="a" style="left:1495px;top:543px;width:184px;height:24px;background:#2c2d31;"></div>
<svg class="a" style="left:1299px;top:541px" width="384" height="28">
<path d="M7 7 H14 L18 11 V20 H7 Z" fill="#f0f0f0"/><path d="M13.5 14.5 L20 17 L18 18 L21 21 L20 22 L17 19 L16 21 Z" fill="#9b59b6" stroke="#37414b" stroke-width="0.6"/>
<path d="M28 12 L32.5 16.5 L37 12" fill="none" stroke="#8a9096" stroke-width="1.1"/>
<path d="M46 7 L60 13 L54.5 14.5 L60 20 L57.5 22 L52 16.5 L50.5 21.5 Z" fill="#9b59b6"/>
<circle cx="370.5" cy="12.5" r="4.4" fill="none" stroke="#b0b0b0" stroke-width="1.1"/><path d="M367.3 15.7 L362 21" stroke="#b0b0b0" stroke-width="1.1"/>
</svg>
<div class="a" style="left:1299px;top:569px;width:367px;height:195px;background:#2c2d31;"></div>
<div class="a" style="left:1666px;top:569px;width:17px;height:116px;background:#37414b;"></div>
<div class="a" style="left:1666px;top:747px;width:17px;height:17px;background:#37414b;"></div>
<div class="a" style="left:1299px;top:569px;width:367px;height:195px;overflow:hidden">
<div class="a ui" style="left:24px;top:0px;width:200px;letter-spacing:-0.108px;">Delphi | Individual Files</div>
<div class="a ui" style="left:24px;top:20px;width:200px;letter-spacing:-0.167px;">Other | Unit Test</div>
<div class="a ui" style="left:24px;top:40px;width:200px;letter-spacing:-0.032px;">Delphi | Windows</div>
<div class="a ui" style="left:24px;top:60px;width:200px;letter-spacing:-0.046px;">Delphi</div>
<div class="a ui" style="left:24px;top:80px;width:200px;letter-spacing:0.049px;">Delphi | Multi-Device</div>
<div class="a ui" style="left:24px;top:100px;width:200px;letter-spacing:-0.227px;">Other | Web</div>
<div class="a ui" style="left:24px;top:120px;width:200px;letter-spacing:-0.154px;">Other</div>
<div class="a ui" style="left:24px;top:140px;width:200px;letter-spacing:-0.159px;">Delphi | DUnitX</div>
<div class="a ui" style="left:24px;top:160px;width:200px;letter-spacing:-0.161px;">Delphi | Web</div>
<div class="a ui" style="left:24px;top:180px;width:200px;letter-spacing:-0.402px;">Delphi | RAD Server</div>
<svg class="a" style="left:0;top:0" width="367" height="200"><path d="M9.5 5 L15 10.5 L9.5 16" fill="none" stroke="#8c8c8c" stroke-width="1.1"/><path d="M9.5 25 L15 30.5 L9.5 36" fill="none" stroke="#8c8c8c" stroke-width="1.1"/><path d="M9.5 45 L15 50.5 L9.5 56" fill="none" stroke="#8c8c8c" stroke-width="1.1"/><path d="M9.5 65 L15 70.5 L9.5 76" fill="none" stroke="#8c8c8c" stroke-width="1.1"/><path d="M9.5 85 L15 90.5 L9.5 96" fill="none" stroke="#8c8c8c" stroke-width="1.1"/><path d="M9.5 105 L15 110.5 L9.5 116" fill="none" stroke="#8c8c8c" stroke-width="1.1"/><path d="M9.5 125 L15 130.5 L9.5 136" fill="none" stroke="#8c8c8c" stroke-width="1.1"/><path d="M9.5 145 L15 150.5 L9.5 156" fill="none" stroke="#8c8c8c" stroke-width="1.1"/><path d="M9.5 165 L15 170.5 L9.5 176" fill="none" stroke="#8c8c8c" stroke-width="1.1"/><path d="M9.5 185 L15 190.5 L9.5 196" fill="none" stroke="#8c8c8c" stroke-width="1.1"/></svg>
</div>
<svg class="a" style="left:1666px;top:569px" width="17" height="195"><path d="M4 11 L8.5 6.5 L13 11" fill="none" stroke="#8f969c" stroke-width="1.1"/><path d="M4 184 L8.5 188.5 L13 184" fill="none" stroke="#8f969c" stroke-width="1.1"/></svg>
<svg class="a" style="left:1640px;top:778px" width="40" height="16">
<rect x="4.5" y="3.5" width="6" height="5" fill="none" stroke="#f4f4f4" stroke-width="1"/><rect x="5" y="4" width="1.6" height="4.5" fill="#f4f4f4"/>
<rect x="3" y="8" width="9" height="1.2" fill="#f4f4f4"/><rect x="6.2" y="9" width="1.2" height="6" fill="#f4f4f4"/>
<path d="M23 4 L32 13 M32 4 L23 13" fill="none" stroke="#f4f4f4" stroke-width="1.1"/>
</svg>
<div class="a" style="left:0px;top:800px;width:1683px;height:1px;background:#353e47;"></div>
<div class="a" style="left:0;top:255px;width:11px;height:485px;overflow:hidden"><div class="a ui" style="left:-5px;top:19px;color:#d8e2ec">Xml</div><div class="a ui" style="left:1px;top:61px;color:#d8e2ec">\C</div><div class="a" style="left:0;top:67px;width:1px;height:8px;background:#c0603a"></div></div></body></html>
